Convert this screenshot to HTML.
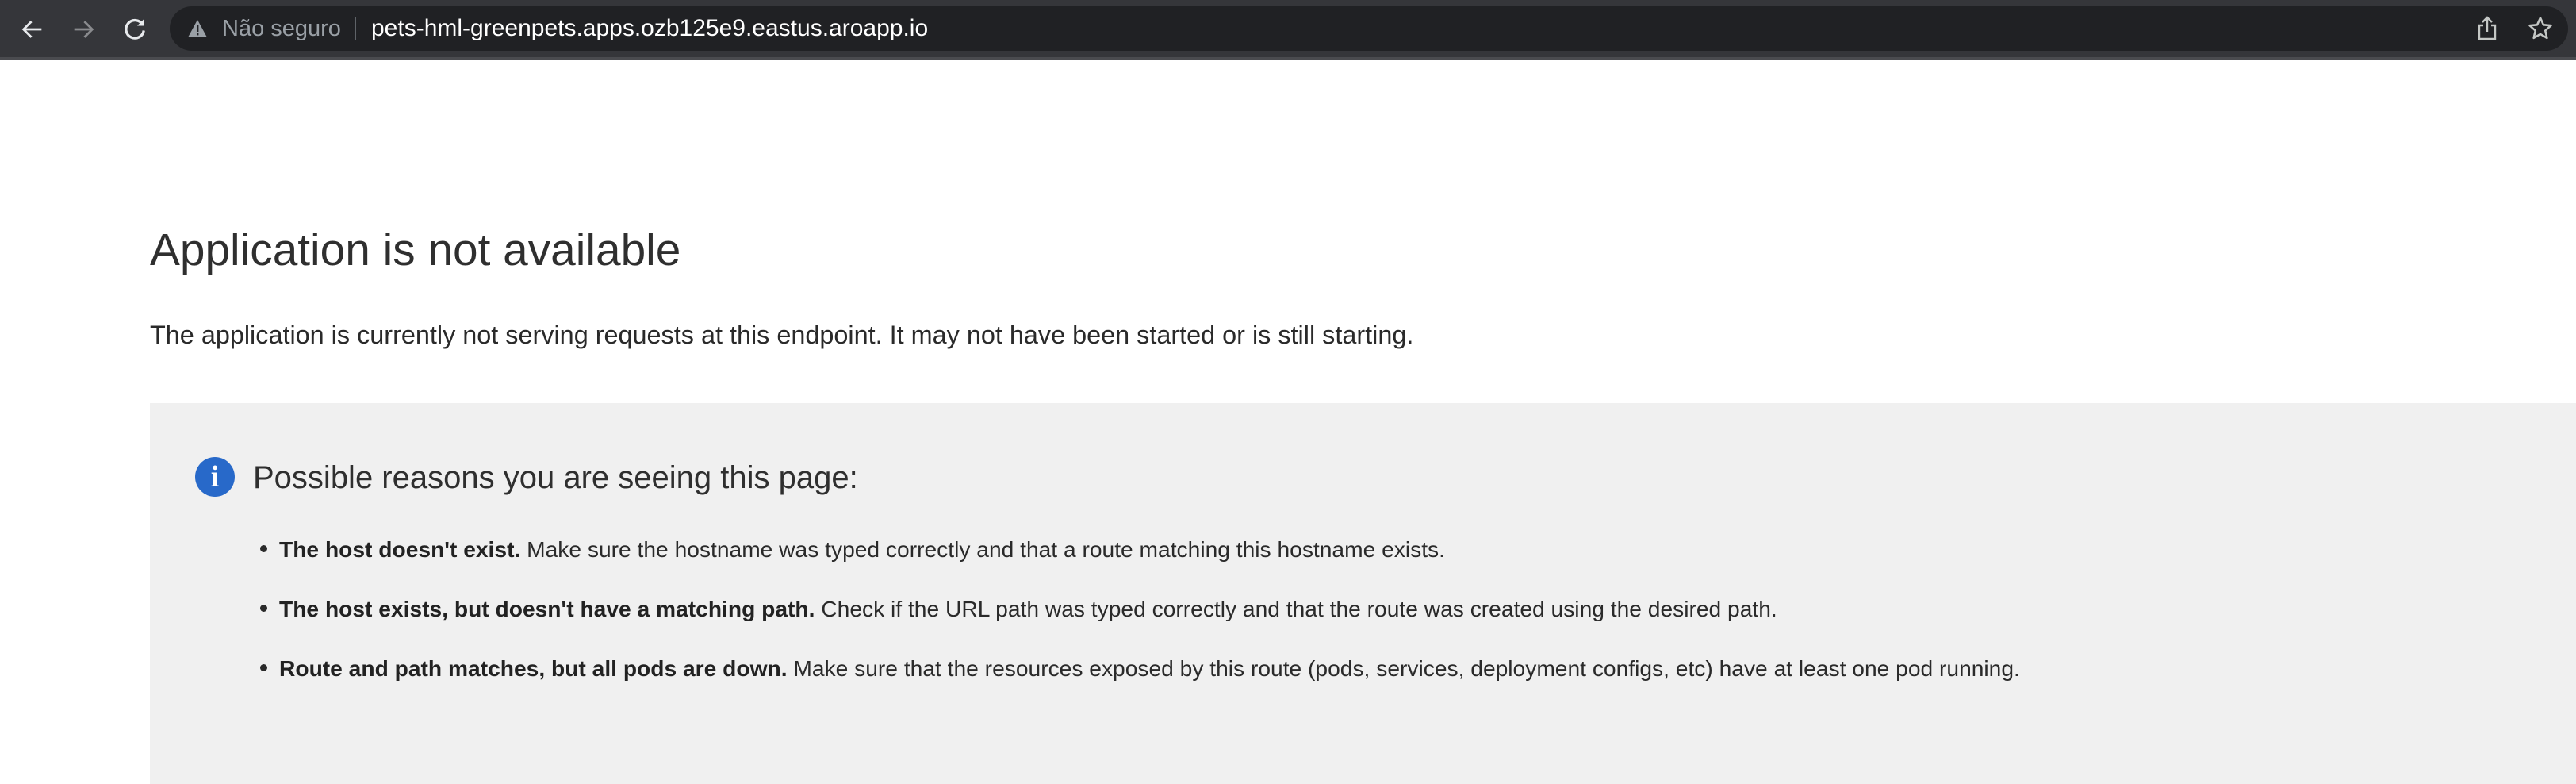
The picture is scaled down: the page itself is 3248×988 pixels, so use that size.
<!DOCTYPE html>
<html><head><meta charset="utf-8"><style>
html,body{margin:0;padding:0;width:3248px;height:978px;overflow:hidden;background:#fff;font-family:"Liberation Sans",Arial,sans-serif;color:#333}
.bar{position:absolute;left:0;top:0;width:3248px;height:72px;background:#35363a;border-bottom:3px solid #4a4b4f}
.omni{position:absolute;left:214px;top:8px;width:3024px;height:56px;background:#202124;border-radius:28px}
.omni .t{position:absolute;top:0;line-height:56px;font-size:29px}
.ic{position:absolute}
h1{position:absolute;left:189px;top:283px;margin:0;font-weight:400;font-size:56.8px;color:#2f2f2f;white-space:nowrap}
p.sub{position:absolute;left:189px;top:404px;margin:0;font-size:32.4px;color:#2a2a2a;white-space:nowrap}
.box{position:absolute;left:189px;top:508px;width:3100px;height:480px;background:#f0f0f0}
.info{position:absolute;left:246px;top:576px;width:50px;height:50px;border-radius:50%;background:#2869c9;color:#fff;font-family:"Liberation Serif",serif;font-weight:bold;font-size:38px;text-align:center;line-height:50px}
h2{position:absolute;left:319px;top:580px;margin:0;font-weight:400;font-size:40px;color:#2f2f2f;white-space:nowrap}
.li{position:absolute;left:352px;font-size:28.2px;color:#2a2a2a;white-space:nowrap}
.li:before{content:"";position:absolute;left:-24px;top:11px;width:9px;height:9px;border-radius:50%;background:#2a2a2a}
.li b{color:#222}
</style></head><body>
<div class="bar">
<svg class="ic" style="left:24px;top:20px" width="34" height="34" viewBox="0 0 24 24"><path d="M20 12H5M11 5l-7 7 7 7" stroke="#e8eaed" stroke-width="2" fill="none"/></svg>
<svg class="ic" style="left:88px;top:20px" width="34" height="34" viewBox="0 0 24 24"><path d="M4 12h15M13 5l7 7-7 7" stroke="#8a8b8e" stroke-width="2" fill="none"/></svg>
<svg class="ic" style="left:152px;top:19px" width="36" height="36" viewBox="0 0 24 24"><path d="M18.5 8A7.5 7.5 0 1 0 19.5 13" stroke="#e8eaed" stroke-width="2.2" fill="none"/><path d="M20 3v6h-6z" fill="#e8eaed"/></svg>
<div class="omni">
<svg class="ic" style="left:22px;top:16px" width="26" height="24" viewBox="0 0 26 24"><path d="M13 1L25 23H1z" fill="#9aa0a6"/><rect x="12" y="8" width="2.4" height="8" fill="#202124"/><rect x="12" y="18" width="2.4" height="2.4" fill="#202124"/></svg>
<div class="t" style="left:66px;color:#9aa0a6">Não seguro</div>
<div style="position:absolute;left:233px;top:14px;width:2px;height:28px;background:#5f6368"></div>
<div class="t" style="left:254px;color:#fff;font-size:30px">pets-hml-greenpets.apps.ozb125e9.eastus.aroapp.io</div>
<svg class="ic" style="left:2909px;top:12px" width="26" height="32" viewBox="0 0 26 32"><path d="M8 12H3v17h20V12h-5M13 2v18M7 8l6-6 6 6" stroke="#c4c7c5" stroke-width="2.4" fill="none"/></svg>
<svg class="ic" style="left:2972px;top:11px" width="34" height="34" viewBox="0 0 24 24"><path d="M12 2.5l2.8 6.2 6.7.6-5.1 4.5 1.5 6.6L12 16.9l-5.9 3.5 1.5-6.6-5.1-4.5 6.7-.6z" stroke="#c4c7c5" stroke-width="1.8" fill="none" stroke-linejoin="round"/></svg>
</div>
</div>
<h1>Application is not available</h1>
<p class="sub">The application is currently not serving requests at this endpoint. It may not have been started or is still starting.</p>
<div class="box"></div>
<div class="info">i</div>
<h2>Possible reasons you are seeing this page:</h2>
<div class="li" style="top:676px"><b>The host doesn't exist.</b> Make sure the hostname was typed correctly and that a route matching this hostname exists.</div>
<div class="li" style="top:751px"><b>The host exists, but doesn't have a matching path.</b> Check if the URL path was typed correctly and that the route was created using the desired path.</div>
<div class="li" style="top:826px"><b>Route and path matches, but all pods are down.</b> Make sure that the resources exposed by this route (pods, services, deployment configs, etc) have at least one pod running.</div>
</body></html>
